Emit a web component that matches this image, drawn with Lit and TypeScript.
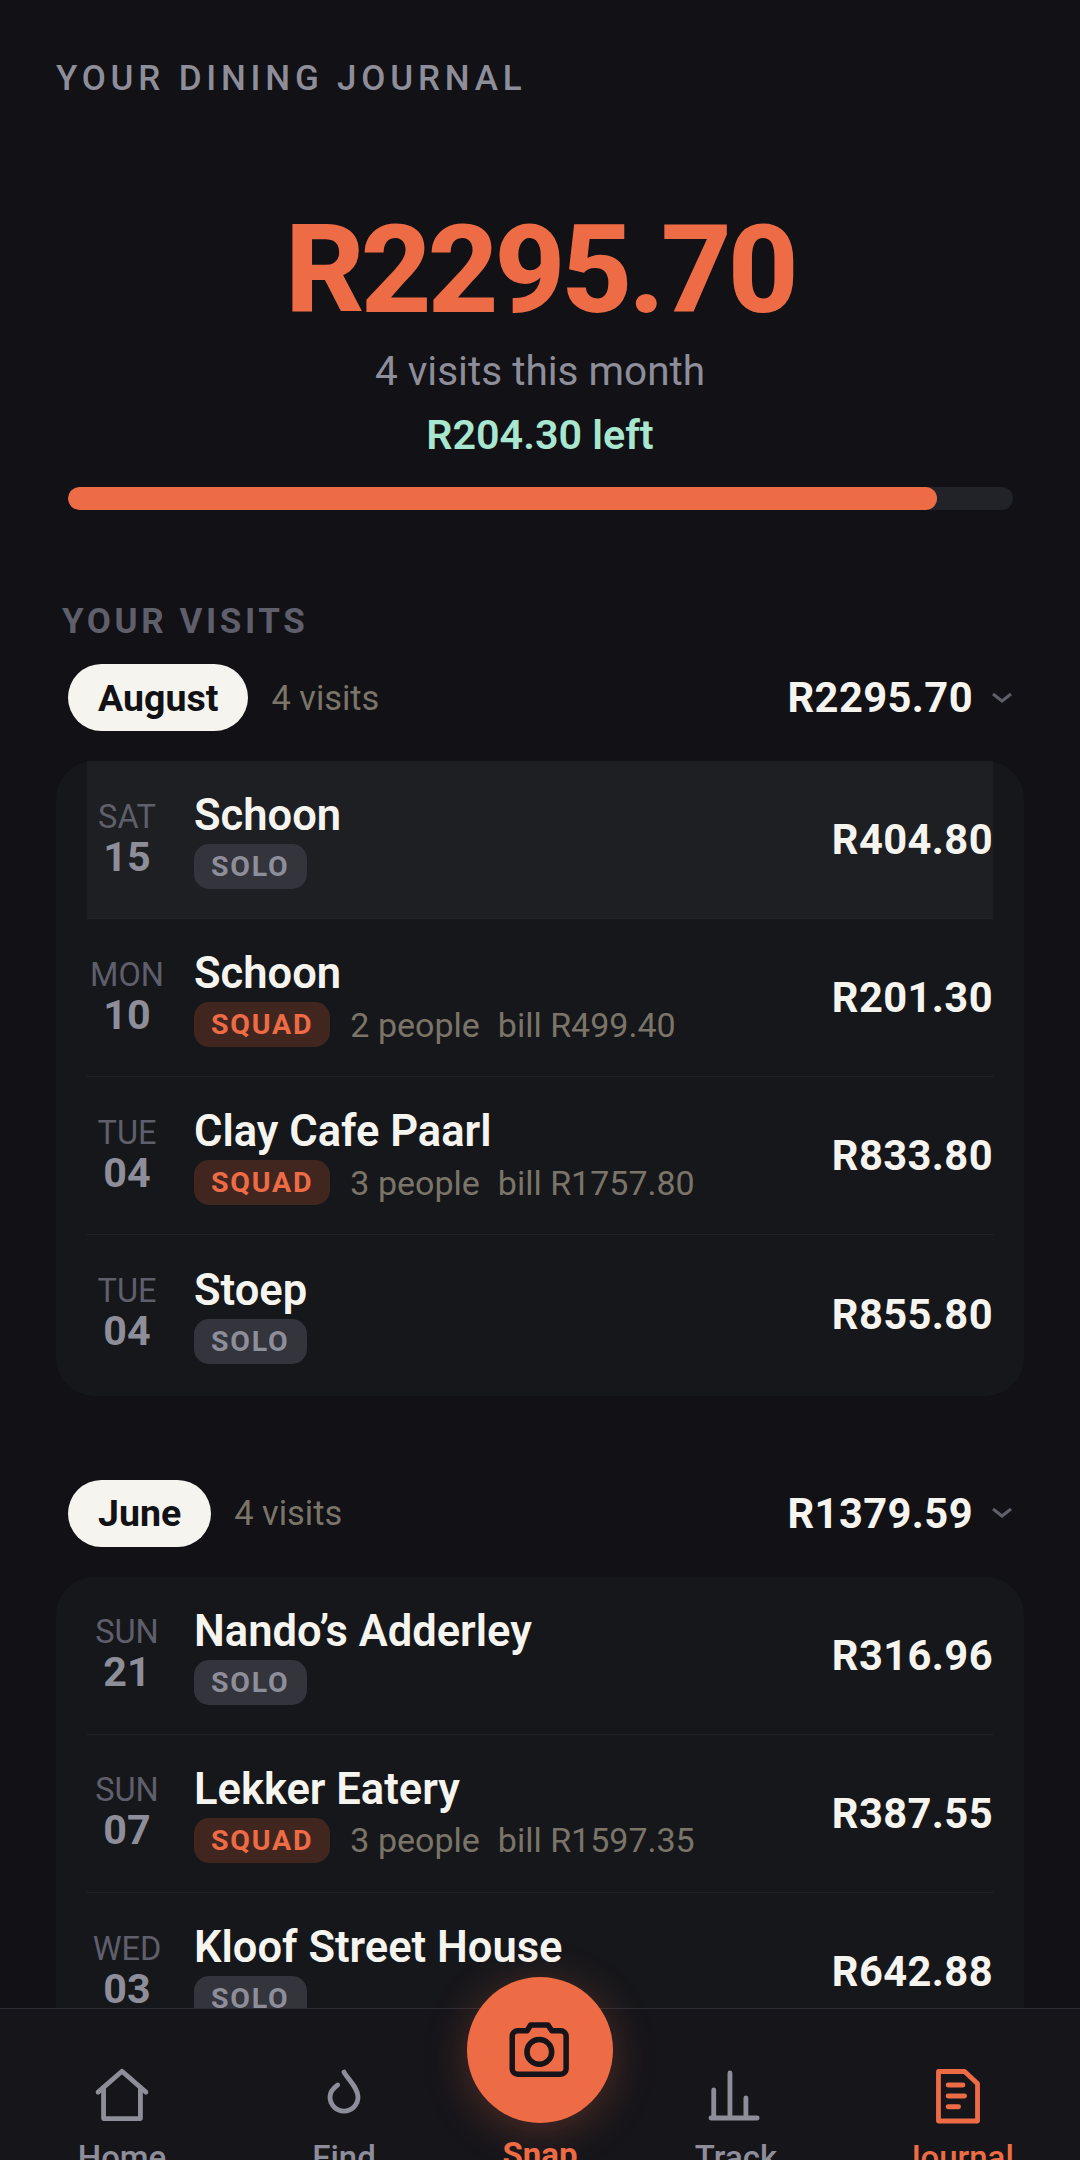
import { LitElement, html, css, svg } from "lit";
import { customElement } from "lit/decorators.js";

interface Visit { dow: string; day: string; name: string; amount: string; kind: "SOLO" | "SQUAD"; people?: string; bill?: string; active?: boolean }
interface Month { name: string; count: string; total: string; visits: Visit[] }

const months: Month[] = [
  { name: "August", count: "4 visits", total: "R2295.70", visits: [
    { dow: "SAT", day: "15", name: "Schoon", amount: "R404.80", kind: "SOLO", active: true },
    { dow: "MON", day: "10", name: "Schoon", amount: "R201.30", kind: "SQUAD", people: "2 people", bill: "bill R499.40" },
    { dow: "TUE", day: "04", name: "Clay Cafe Paarl", amount: "R833.80", kind: "SQUAD", people: "3 people", bill: "bill R1757.80" },
    { dow: "TUE", day: "04", name: "Stoep", amount: "R855.80", kind: "SOLO" },
  ]},
  { name: "June", count: "4 visits", total: "R1379.59", visits: [
    { dow: "SUN", day: "21", name: "Nando’s Adderley", amount: "R316.96", kind: "SOLO" },
    { dow: "SUN", day: "07", name: "Lekker Eatery", amount: "R387.55", kind: "SQUAD", people: "3 people", bill: "bill R1597.35" },
    { dow: "WED", day: "03", name: "Kloof Street House", amount: "R642.88", kind: "SOLO" },
  ]},
];

@customElement("app-root")
export class AppRoot extends LitElement {
  static styles = css`
    :host { display: block; width: 1080px; height: 2160px; overflow: hidden; position: relative; background: #111116; font-family: Roboto, "Noto Sans", sans-serif; color: #f5f4ef; }
    .title { margin: 0; padding: 58px 56px 0; font-size: 35px; line-height: 42px; font-weight: 500; letter-spacing: 4.8px; color: #8e8e9a; }
    .hero { display: flex; flex-direction: column; align-items: center; padding-top: 104px; }
    .amount { font-size: 123px; line-height: 132px; font-weight: 800; color: #ee6c45; letter-spacing: -4px; }
    .sub { font-size: 40.5px; line-height: 54px; color: #8e8e9a; margin-top: 8px; }
    .left { font-size: 41.25px; line-height: 54px; font-weight: 600; color: #a8e6cf; margin-top: 10px; }
    .bar { margin: 25px 67px 0 68px; height: 23px; border-radius: 12px; background: #222329; overflow: hidden; }
    .fill { height: 100%; border-radius: 12px; background: #ee6c45; }
    .section { margin: 0; padding: 90px 62px 0; font-size: 35px; line-height: 44px; font-weight: 700; letter-spacing: 3.6px; color: #5f5f6b; }
    .month { display: flex; align-items: center; padding: 0 67px 0 68px; margin-top: 20px; height: 67px; }
    .pill { height: 67px; display: flex; align-items: center; padding: 0 30px; border-radius: 34px; background: #f5f4ef; color: #111116; font-size: 37.5px; font-weight: 700; }
    .count { margin-left: 23px; font-size: 34.4px; color: #7a7568; }
    .total { margin-left: auto; font-size: 41.7px; font-weight: 700; letter-spacing: 0.4px; color: #f5f4ef; }
    .chev { margin-left: 18px; width: 22px; height: 12px; }
    .card { margin: 30px 56px 0; background: #16171b; border-radius: 38px; padding: 0 31px 3px; }
    .group { margin-bottom: 83.5px; }
    .row { display: flex; align-items: center; box-sizing: border-box; height: 158px; border-bottom: 1.5px solid #222329; }
    .row:last-child { border-bottom: none; }
    .row.active { background: #1e1f23; }
    .date { width: 80px; display: flex; flex-direction: column; align-items: center; margin-right: 27px; }
    .dow { font-size: 32.5px; line-height: 36px; color: #5f5f6b; margin-top: -2px; }
    .day { font-size: 41.25px; line-height: 44px; font-weight: 700; color: #8e8e9a; }
    .info { flex: 1; display: flex; flex-direction: column; align-items: flex-start; }
    .name { font-size: 43.5px; line-height: 52px; font-weight: 600; color: #f5f4ef; }
    .meta { display: flex; align-items: center; margin-top: 2px; }
    .tag { height: 45px; display: flex; align-items: center; padding: 0 17px; border-radius: 15px; font-size: 28.5px; font-weight: 700; letter-spacing: 1.8px; }
    .tag.SOLO { background: #33343c; color: #8e8e9a; }
    .tag.SQUAD { background: #412620; color: #ee6c45; }
    .people { margin-left: 20px; font-size: 34px; color: #7a7568; }
    .bill { margin-left: 18px; font-size: 34px; color: #7a7568; }
    .price { font-size: 41.7px; font-weight: 700; letter-spacing: 0.4px; color: #f5f4ef; }
    nav { position: absolute; left: 0; right: 0; top: 2008px; height: 200px; background: #15151a; border-top: 1.5px solid #2c2c34; display: grid; grid-template-columns: 244px 200px 192px 200px 244px; }
    .tab { display: flex; flex-direction: column; align-items: center; padding-top: 54px; font-size: 33px; font-weight: 500; color: #8e8e9a; }
    .tab.on { color: #ee6c45; }
    .tab svg { width: 66px; height: 66px; display: block; flex: none; }
    .tab span { margin-top: 9px; line-height: 40px; }
    .tab.snap span { margin-top: 72px; font-weight: 700; }
    .fab { position: absolute; left: 467px; top: -32px; width: 146px; height: 146px; border-radius: 50%; background: #ee6c45; box-shadow: 0 8px 44px rgba(238,108,69,0.28); display: flex; align-items: center; justify-content: center; }
    .fab svg { width: 66px; height: 66px; }
  `;

  private tag(v: Visit) {
    return html`<div class="meta"><span class="tag ${v.kind}">${v.kind}</span>${v.people ? html`<span class="people">${v.people}</span><span class="bill">${v.bill}</span>` : ""}</div>`;
  }

  render() {
    const ic = (p: unknown) => html`<svg viewBox="0 0 24 24" fill="none" stroke="currentColor" stroke-width="1.75" stroke-linecap="round" stroke-linejoin="round">${p}</svg>`;
    return html`
      <h1 class="title">YOUR DINING JOURNAL</h1>
      <div class="hero">
        <div class="amount">R2295.70</div>
        <div class="sub">4 visits this month</div>
        <div class="left">R204.30 left</div>
      </div>
      <div class="bar"><div class="fill" style="width: 92%"></div></div>
      <h2 class="section">YOUR VISITS</h2>
      ${months.map((m) => html`
        <div class="group">
          <div class="month">
            <span class="pill">${m.name}</span>
            <span class="count">${m.count}</span>
            <span class="total">${m.total}</span>
            <svg class="chev" viewBox="0 0 22 12" fill="none" stroke="#5f5f6b" stroke-width="3"><path d="M2 2l9 7 9-7"/></svg>
          </div>
          <div class="card">
            ${m.visits.map((v) => html`
              <div class="row ${v.active ? "active" : ""}">
                <div class="date"><span class="dow">${v.dow}</span><span class="day">${v.day}</span></div>
                <div class="info"><span class="name">${v.name}</span>${this.tag(v)}</div>
                <span class="price">${v.amount}</span>
              </div>`)}
          </div>
        </div>`)}
      <nav>
        <div class="tab">${ic(svg`<path d="M3.3 10.6L12 3l8.700 7.600"/><path d="M5.300 9v11.200h13.400V9"/>`)}<span>Home</span></div>
        <div class="tab">${ic(svg`<path d="M12 3.300C13.500 6 17.100 9 17.100 12.400A5.100 5.100 0 0 1 6.900 12.400C6.900 10.500 8 9.200 9.700 8"/>`)}<span>Find</span></div>
        <div class="tab snap on"><span>Snap</span></div>
        <div class="tab">${ic(svg`<path d="M3.900 20V9.800M9.800 20V3.600M15.600 20v-7.300M2.900 20h16.800"/>`)}<span>Track</span></div>
        <div class="tab on">${ic(svg`<path d="M4.900 3.100h9.500l4.700 4.400v13.600H4.900z"/><path d="M8.400 8h5.400M8.400 12h6M8.400 15.900h3.800"/>`)}<span>Journal</span></div>
        <div class="fab"><svg viewBox="0 0 24 24" fill="none" stroke="#16141a" stroke-width="2" stroke-linejoin="round"><path d="M3.900 5h3.400l1.300-2.100h6.300L16.300 5h3.200a2 2 0 0 1 2 2v11.800a2 2 0 0 1-2 2H3.900a2 2 0 0 1-2-2V7a2 2 0 0 1 2-2z"/><circle cx="11.750" cy="12.700" r="4.500"/></svg></div>
      </nav>
    `;
  }
}
